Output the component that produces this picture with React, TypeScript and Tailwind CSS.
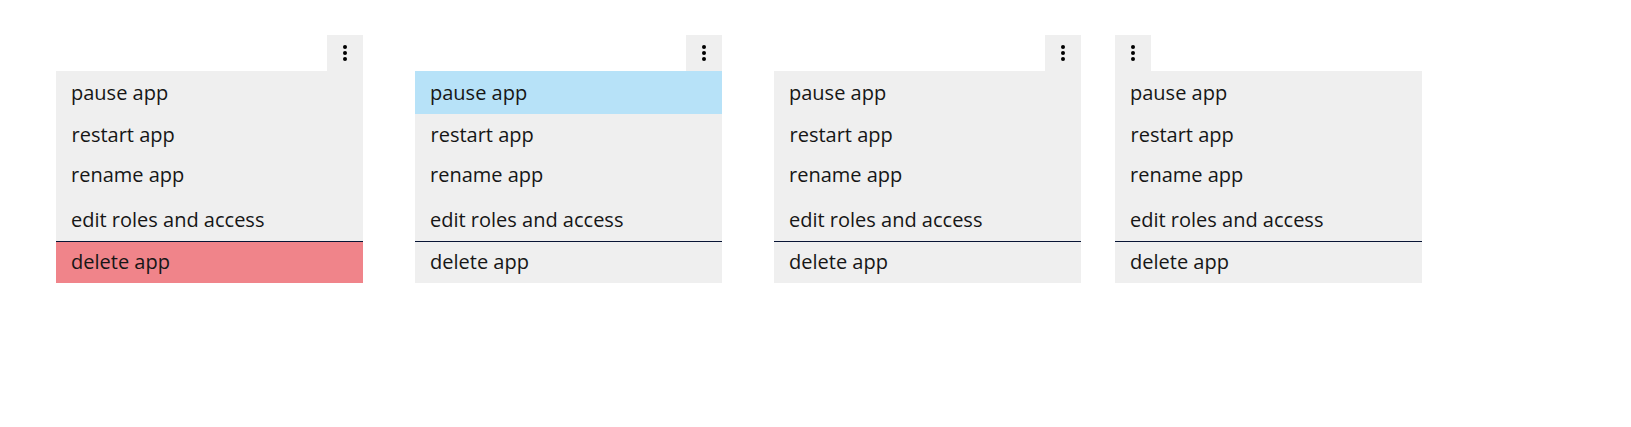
import React from "react";

function Kebab() {
  return (
    <div className="flex h-[36px] w-[36px] flex-col items-center justify-center gap-[2.5px] bg-[#efefef]">
      <span className="block h-[3.5px] w-[3.5px] rounded-full bg-black" />
      <span className="block h-[3.5px] w-[3.5px] rounded-full bg-black" />
      <span className="block h-[3.5px] w-[3.5px] rounded-full bg-black" />
    </div>
  );
}

function Menu({ kebabLeft, blue, red }: { kebabLeft?: boolean; blue?: boolean; red?: boolean }) {
  return (
    <div className="flex w-[307px] flex-col">
      <div className={kebabLeft ? "flex justify-start" : "flex justify-end"}>
        <Kebab />
      </div>
      <div className="flex flex-col bg-[#efefef] text-[20px] text-[#161616]">
        <div className={"flex h-[43px] items-center pl-[15px] " + (blue ? "bg-[#b7e2f8]" : "")}>pause app</div>
        <div className="flex h-[42px] items-center pl-[15.5px]">restart app</div>
        <div className="flex h-[42px] items-center pb-[4px] pl-[15px]">rename app</div>
        <div className="flex h-[43px] items-center pl-[15px]">edit roles and access</div>
        <div className="h-[1px] bg-[#081535]" />
        <div className={"flex h-[41px] items-center pb-[1px] pl-[15px] " + (red ? "bg-[#f0848a]" : "")}>delete app</div>
      </div>
    </div>
  );
}

export default function App() {
  return (
    <div
      className="h-[427px] w-full bg-white pl-[56px] pt-[35px]"
      style={{ fontFamily: "'Open Sans', sans-serif" }}
    >
      <div className="flex items-start">
        <Menu red />
        <div className="ml-[52px]">
          <Menu blue />
        </div>
        <div className="ml-[52px]">
          <Menu />
        </div>
        <div className="ml-[34px]">
          <Menu kebabLeft />
        </div>
      </div>
    </div>
  );
}
